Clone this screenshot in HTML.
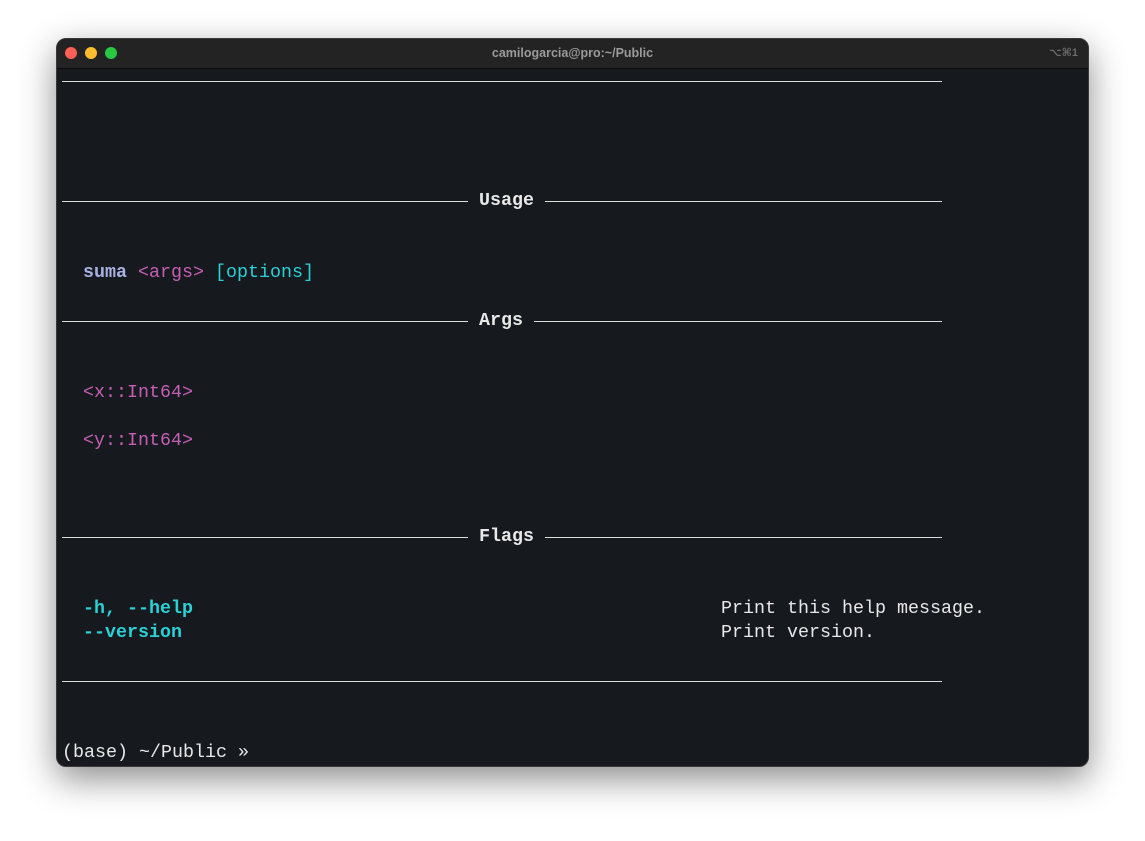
<!DOCTYPE html>
<html><head><meta charset="utf-8"><style>
html,body{margin:0;padding:0;width:1145px;height:841px;background:#fff;overflow:hidden}
.win{position:absolute;left:56px;top:38px;width:1033px;height:729px;border-radius:10px;background:#16191e;box-shadow:0 12px 35px rgba(0,0,0,.45);overflow:hidden;border:1px solid #3a3a3a;box-sizing:border-box}
.tb{position:absolute;left:0;top:0;right:0;height:29px;background:#232323;border-bottom:1px solid #0c0c0c}
.dot{position:absolute;top:8px;width:12px;height:12px;border-radius:50%}
.title{position:absolute;left:0;right:0;top:7px;text-align:center;font:bold 12.5px "Liberation Sans",sans-serif;color:#9a9a9a}
.kb{position:absolute;right:10px;top:7px;font:bold 11px "Liberation Sans","DejaVu Sans",sans-serif;color:#6a6a6a}
.t{position:absolute;font-family:"Liberation Mono","DejaVu Sans Mono",monospace;font-size:18.33px;line-height:24px;white-space:pre;color:#e8e8e8}
.hl{position:absolute;height:1px;background:#dcdcdc}
.w{color:#e8e8e8}.b{color:#a9b1e0;font-weight:bold}.m{color:#c55fb5}.c{color:#2ad1d6}.cb{color:#2ad1d6;font-weight:bold}
</style></head><body>
<div class="win">
<div class="tb">
<div class="dot" style="left:8px;background:#fe5f57"></div>
<div class="dot" style="left:28px;background:#febc2e"></div>
<div class="dot" style="left:48px;background:#28c840"></div>
<div class="title">camilogarcia@pro:~/Public</div>
<div class="kb">⌥⌘1</div>
</div>
</div>
<div class="hl" style="left:62px;width:880px;top:81px"></div>
<div class="hl" style="left:62px;width:406px;top:201px"></div><div class="t" style="left:479px;top:189px;font-weight:bold">Usage</div><div class="hl" style="left:545px;width:397px;top:201px"></div>
<div class="t" style="left:83px;top:261px"><span class="b">suma</span> <span class="m">&lt;args&gt;</span> <span class="c">[options]</span></div>
<div class="hl" style="left:62px;width:406px;top:321px"></div><div class="t" style="left:479px;top:309px;font-weight:bold">Args</div><div class="hl" style="left:534px;width:408px;top:321px"></div>
<div class="t m" style="left:83px;top:381px">&lt;x::Int64&gt;</div>
<div class="t m" style="left:83px;top:429px">&lt;y::Int64&gt;</div>
<div class="hl" style="left:62px;width:406px;top:537px"></div><div class="t" style="left:479px;top:525px;font-weight:bold">Flags</div><div class="hl" style="left:545px;width:397px;top:537px"></div>
<div class="t cb" style="left:83px;top:597px">-h, --help</div>
<div class="t cb" style="left:83px;top:621px">--version</div>
<div class="t" style="left:721px;top:597px">Print this help message.</div>
<div class="t" style="left:721px;top:621px">Print version.</div>
<div class="hl" style="left:62px;width:880px;top:681px"></div>
<div class="t" style="left:62px;top:741px">(base) ~/Public »</div>
</body></html>
